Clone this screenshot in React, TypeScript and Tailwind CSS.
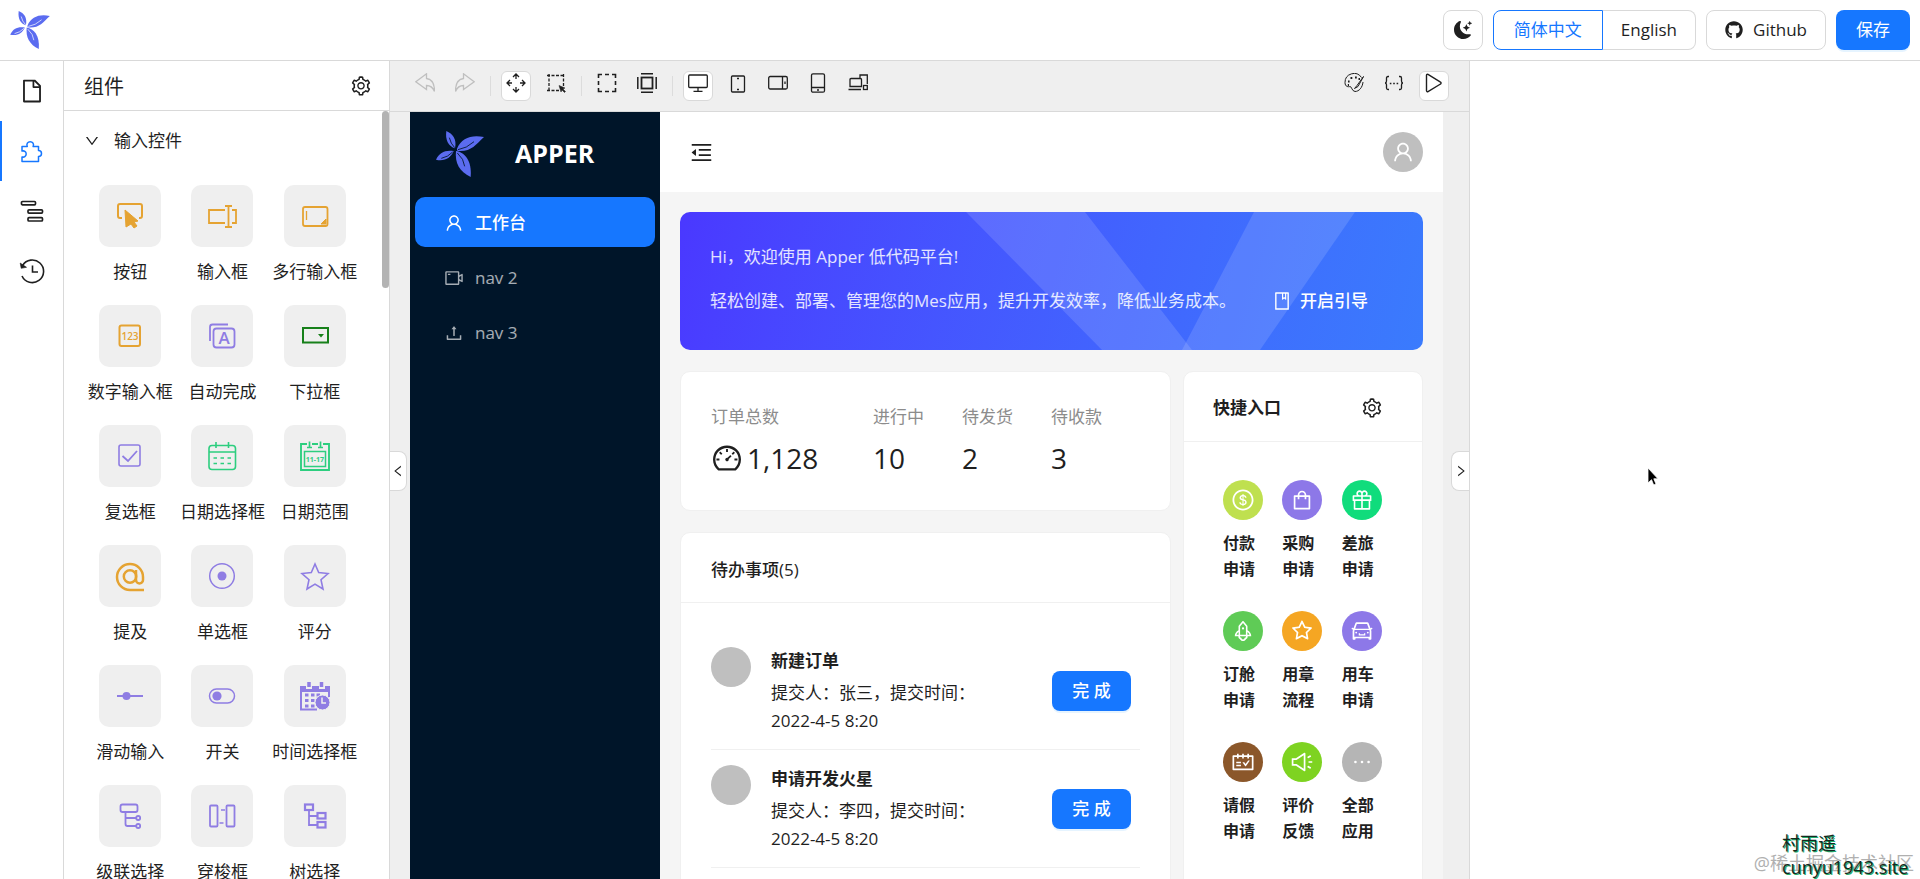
import React, { ReactNode } from 'react';
import {
  AiOutlineBook,
  AiOutlineCar,
  AiOutlineDashboard,
  AiOutlineDollarCircle,
  AiOutlineDown,
  AiOutlineEllipsis,
  AiOutlineFile,
  AiOutlineGift,
  AiOutlineLeft,
  AiOutlineMenuFold,
  AiOutlineRight,
  AiOutlineRocket,
  AiOutlineSchedule,
  AiOutlineSetting,
  AiOutlineShopping,
  AiOutlineSound,
  AiOutlineStar,
  AiOutlineUpload,
  AiOutlineUser,
  AiOutlineVideoCamera,
} from 'react-icons/ai';
import { BsMoonStarsFill } from 'react-icons/bs';
import { FaGithub } from 'react-icons/fa';

const Logo = ({ className }: { className: string }) => (
  <svg viewBox="0 0 144 138" className={className} fill="#5b6cf0" aria-hidden="true">
    <path d="M31 0C50 8 63 24 57 52 38 46 27 28 31 0Z" />
    <path d="M144 18C108 10 76 20 63 53c-1 4 1 7 5 7 38 2 50-18 76-42Z" />
    <path d="M0 86C10 64 28 56 53 60 45 80 26 92 0 86Z" />
    <path d="M60 60c26 4 48 28 44 78-34-16-48-42-44-78Z" />
    <path
      d="M40 20Q44 38 56 50M66 56Q92 52 114 32M16 82Q36 78 50 63M64 66Q84 84 86 106"
      fill="none"
      stroke="currentColor"
      strokeWidth="2.5"
    />
  </svg>
);

const Line = ({ children, size = 'size-5' }: { children: ReactNode; size?: string }) => (
  <svg viewBox="0 0 20 20" className={size} fill="none" stroke="currentColor" strokeWidth="1.3" aria-hidden="true">
    {children}
  </svg>
);

const railItems = [
  { label: '页面', icon: <AiOutlineFile className="size-[26px]" />, active: false },
  {
    label: '组件',
    icon: (
      <svg viewBox="0 0 24 24" className="size-6" fill="none" stroke="currentColor" strokeWidth="1.5" aria-hidden="true">
        <path d="M2 7.500h5.300a3.300 3.300 0 1 1 5.800 0H18.500v4a3 3 0 1 1 0 6V22.500H2v-4.600a3.100 3.100 0 1 0 0-5.800Z" strokeLinejoin="round" />
      </svg>
    ),
    active: true,
  },
  {
    label: '大纲',
    icon: (
      <svg viewBox="0 0 24 24" className="size-6" fill="none" stroke="currentColor" strokeWidth="1.7" aria-hidden="true">
        <rect x="1.500" y="2.500" width="14" height="3.300" rx="1" />
        <rect x="8" y="10.800" width="14.500" height="3.300" rx="1" />
        <rect x="8" y="18.700" width="14.500" height="3.300" rx="1" />
      </svg>
    ),
    active: false,
  },
  {
    label: '历史',
    icon: (
      <svg viewBox="0 0 26 26" className="size-[26px]" fill="none" stroke="currentColor" strokeWidth="1.6" aria-hidden="true">
        <path d="M3.600 7.500A11.300 11.300 0 1 1 3 18M13.500 7.500V14H19" />
        <path d="M1.200 5l1 5.300 5.300-1z" fill="currentColor" strokeWidth=".6" />
      </svg>
    ),
    active: false,
  },
];

const ORANGE = 'text-[#e5a332]';
const PURPLE = 'text-[#8f7de3]';
const GREEN = 'text-[#2dce7f]';

const widgets = [
  {
    name: '按钮',
    color: ORANGE,
    art: (
      <>
        <path d="M23 33h-2a2 2 0 0 1-2-2V21a2 2 0 0 1 2-2h20a2 2 0 0 1 2 2v10a2 2 0 0 1-2 2h-1" />
        <path d="M26 25l13 11-4 1 3 4-3 2-3-4-5 3z" fill="currentColor" strokeWidth="1" />
      </>
    ),
  },
  {
    name: '输入框',
    color: ORANGE,
    art: <path d="M34 25H18v13h16M41 25h4v13h-4M34 21h7M34 42h7M37.500 21v21" strokeWidth="1.800" />,
  },
  {
    name: '多行输入框',
    color: ORANGE,
    art: (
      <>
        <rect x="19" y="22" width="24.500" height="19" rx="2" strokeWidth="1.800" />
        <path d="M22.500 26v9" strokeWidth="1.300" />
        <path d="M37 39l5-5v5z" fill="currentColor" strokeWidth="1" />
      </>
    ),
  },
  {
    name: '数字输入框',
    color: ORANGE,
    art: (
      <>
        <rect x="20.500" y="20.500" width="20.500" height="20.500" rx="2" />
        <text x="31" y="35" textAnchor="middle" fontSize="10" fontWeight="600" fill="currentColor" stroke="none">
          123
        </text>
      </>
    ),
  },
  {
    name: '自动完成',
    color: PURPLE,
    art: (
      <>
        <rect x="22.500" y="23.500" width="21" height="19" rx="3" strokeWidth="1.800" />
        <path d="M37 19.500H21.500a2.500 2.500 0 0 0-2.500 2.500v14" strokeWidth="1.800" />
        <text x="33" y="39" textAnchor="middle" fontSize="17" fontWeight="600" fill="currentColor" stroke="none">
          A
        </text>
      </>
    ),
  },
  {
    name: '下拉框',
    color: 'text-[#17801a]',
    art: (
      <>
        <rect x="19" y="23" width="25" height="14.500" />
        <path d="M34 29h6l-3 3.500z" fill="currentColor" stroke="none" />
      </>
    ),
  },
  {
    name: '复选框',
    color: PURPLE,
    art: (
      <>
        <rect x="20" y="20" width="21" height="21" rx="2" strokeWidth="1.600" />
        <path d="M23.500 31l5.500 5 9-10" strokeWidth="1.800" />
      </>
    ),
  },
  {
    name: '日期选择框',
    color: GREEN,
    art: (
      <>
        <rect x="18" y="20.500" width="26.500" height="24" rx="3" strokeWidth="1.600" />
        <path d="M18 27h26M25 17v6M37.500 17v6" strokeWidth="1.600" />
        <path d="M22.500 33h3.500M29.500 33h3.500M36.500 33h3.500M22.500 38.500h3.500M29.500 38.500h3.500M36.500 38.500h3.500" strokeWidth="1.600" />
      </>
    ),
  },
  {
    name: '日期范围',
    color: GREEN,
    art: (
      <>
        <path d="M23 19h-6v26h28V19h-6M28 19h6" strokeWidth="1.900" />
        <path d="M25.500 16.500v6M36.500 16.500v6M23 22.500h5M34 22.500h5" strokeWidth="1.700" />
        <rect x="20.500" y="26.500" width="21" height="15" strokeWidth="1.500" />
        <text x="31" y="37" textAnchor="middle" fontSize="7" fontWeight="700" fill="currentColor" stroke="none">
          11-17
        </text>
      </>
    ),
  },
  {
    name: '提及',
    color: ORANGE,
    art: (
      <>
        <path d="M45 45H31a13 13 0 1 1 13-13v3a3.500 3.500 0 0 1-7 0V25" strokeWidth="2.500" />
        <circle cx="31" cy="31.500" r="6.200" strokeWidth="2.500" />
      </>
    ),
  },
  {
    name: '单选框',
    color: PURPLE,
    art: (
      <>
        <circle cx="31" cy="31" r="12.300" strokeWidth="1.500" />
        <circle cx="31" cy="31" r="4.500" fill="currentColor" stroke="none" />
      </>
    ),
  },
  {
    name: '评分',
    color: PURPLE,
    art: <path d="M31 19l3.700 8.600 9.300.9-7 6.200 2 9.300-8-4.900-8 4.900 2-9.300-7-6.200 9.300-.9z" strokeWidth="1.600" />,
  },
  {
    name: '滑动输入',
    color: PURPLE,
    art: (
      <>
        <path d="M18 31h26" strokeWidth="1.800" />
        <circle cx="27.500" cy="31" r="4" fill="currentColor" stroke="none" />
      </>
    ),
  },
  {
    name: '开关',
    color: PURPLE,
    art: (
      <>
        <rect x="18.500" y="24" width="25" height="14" rx="7" strokeWidth="1.500" />
        <circle cx="26" cy="31" r="4.600" fill="currentColor" stroke="none" />
      </>
    ),
  },
  {
    name: '时间选择框',
    color: PURPLE,
    art: (
      <>
        <path d="M17 26v18.500h16M45 26v6" />
        <path d="M16 21h6v3h6v-3h7v3h6v-3h5v6H16z" fill="currentColor" stroke="none" />
        <path d="M25 17v5M37.500 17v5" strokeWidth="3.500" />
        <path d="M21 30h3.500M27 30h3.500M32.500 30h3.500M21 35.500h3.500M27 35.500h3.500M21 41h3.500M27 41h3.500" strokeWidth="3.200" />
        <circle cx="38.500" cy="37.500" r="7.500" fill="currentColor" stroke="#efefef" strokeWidth="1" />
        <path d="M38 32.500v5.500h4" stroke="#efefef" strokeWidth="1.500" />
      </>
    ),
  },
  {
    name: '级联选择',
    color: PURPLE,
    art: (
      <g strokeWidth="1.800">
        <rect x="21.500" y="19.500" width="17" height="7.500" rx="2" />
        <path d="M26.500 27v12a2 2 0 0 0 2 2H37M26.500 33H37" />
        <circle cx="39.200" cy="33" r="2" />
        <circle cx="39.200" cy="41" r="2" />
      </g>
    ),
  },
  {
    name: '穿梭框',
    color: PURPLE,
    art: (
      <g strokeWidth="1.800">
        <rect x="19" y="20.500" width="7.500" height="21" rx="1" />
        <rect x="35.500" y="20.500" width="8" height="21" rx="1" />
        <path d="M30 25h4M28.500 38h4" strokeWidth="1.400" />
      </g>
    ),
  },
  {
    name: '树选择',
    color: PURPLE,
    art: (
      <g strokeWidth="2.200">
        <rect x="21" y="19.500" width="8" height="5.500" />
        <rect x="33.500" y="28" width="8" height="5.500" />
        <rect x="33.500" y="37" width="8" height="5.500" />
        <path d="M25 25v15h8M25 31h8" strokeWidth="1.800" />
      </g>
    ),
  },
];

const undoArrow = 'M.8 8.800L11.500.8v4.700c4.500.5 8 4.500 8 13-1.500-4-4-6-8-6V16.500z';

const tools: { label: string; icon: ReactNode; active?: boolean; muted?: boolean; split?: boolean }[] = [
  { label: '撤销', muted: true, icon: <Line><path d={undoArrow} /></Line> },
  { label: '重做', muted: true, icon: <Line><g transform="matrix(-1 0 0 1 20 0)"><path d={undoArrow} /></g></Line> },
  {
    label: '移动',
    active: true,
    split: true,
    icon: (
      <Line>
        <path d="M10 1v5M7 4l3-3 3 3M10 19v-5M7 16l3 3 3-3M1 10h5M4 7l-3 3 3 3M19 10h-5M16 7l3 3-3 3" />
      </Line>
    ),
  },
  {
    label: '框选',
    icon: (
      <Line>
        <path d="M1 2.500h18M3 1v18M17.500 1v12M1 17.500h12" strokeDasharray="3 1.500" />
        <path d="M13 12.500l6 2.500-2 1 2.500 2.500-1 1-2.500-2.500-1 2z" fill="currentColor" strokeWidth=".5" />
      </Line>
    ),
  },
  {
    label: '选区',
    split: true,
    icon: (
      <Line>
        <path d="M1.500 5V1.500H5M8 1.500h4M15 1.500h3.500V5M18.500 8v4M18.500 15v3.500H15M12 18.500H8M5 18.500H1.500V15M1.500 12V8" strokeWidth="1.600" />
      </Line>
    ),
  },
  {
    label: '容器',
    icon: (
      <Line>
        <rect x="4.500" y="4.500" width="11" height="11" strokeWidth="1.800" />
        <path d="M4 .8h12M4 19.200h12M.8 4v12M19.200 4v12" strokeWidth="1.500" />
      </Line>
    ),
  },
  {
    label: '桌面',
    active: true,
    split: true,
    icon: (
      <Line>
        <rect x=".7" y="2" width="18.600" height="12.500" rx="1" />
        <path d="M10 14.500V18M5.500 18.300h9" />
      </Line>
    ),
  },
  {
    label: '平板竖屏',
    icon: (
      <Line>
        <rect x="3.500" y="3" width="13" height="16" rx="1" />
        <path d="M9 5.500h2M9 16.500h2" strokeWidth="1.600" />
      </Line>
    ),
  },
  {
    label: '平板横屏',
    icon: (
      <Line>
        <rect x=".7" y="3.500" width="18.600" height="12.500" rx="1.500" />
        <path d="M14.500 3.500V16M17 8.500v2.500" />
      </Line>
    ),
  },
  {
    label: '手机竖屏',
    icon: (
      <Line>
        <rect x="3.500" y=".8" width="13" height="18.400" rx="1.500" />
        <path d="M3.500 14.500h13M9 17h2" />
      </Line>
    ),
  },
  {
    label: '多设备',
    icon: (
      <Line>
        <path d="M12 5V2h7.300v9M2 13.500V6.500a1 1 0 0 1 1-1h9.500a1 1 0 0 1 1 1v7zM.5 16.500h12.500" />
        <rect x="15.500" y="12.500" width="3.800" height="4" />
      </Line>
    ),
  },
];

const menus = [
  { text: '工作台', icon: <AiOutlineUser className="size-5" />, active: true },
  { text: 'nav 2', icon: <AiOutlineVideoCamera className="size-5" />, active: false },
  { text: 'nav 3', icon: <AiOutlineUpload className="size-5" />, active: false },
];

const stats = [
  { label: '进行中', value: '10' },
  { label: '待发货', value: '2' },
  { label: '待收款', value: '3' },
];

const todos = [
  { title: '新建订单', person: '张三', time: '2022-4-5 8:20' },
  { title: '申请开发火星', person: '李四', time: '2022-4-5 8:20' },
];

const shortcuts = [
  { lines: ['付款', '申请'], bg: 'bg-[#bfe04f]', icon: AiOutlineDollarCircle },
  { lines: ['采购', '申请'], bg: 'bg-[#8d78e8]', icon: AiOutlineShopping },
  { lines: ['差旅', '申请'], bg: 'bg-[#10dc7c]', icon: AiOutlineGift },
  { lines: ['订舱', '申请'], bg: 'bg-[#5fcb56]', icon: AiOutlineRocket },
  { lines: ['用章', '流程'], bg: 'bg-[#f5a623]', icon: AiOutlineStar },
  { lines: ['用车', '申请'], bg: 'bg-[#8d78e8]', icon: AiOutlineCar },
  { lines: ['请假', '申请'], bg: 'bg-[#8b572a]', icon: AiOutlineSchedule },
  { lines: ['评价', '反馈'], bg: 'bg-[#7ed321]', icon: AiOutlineSound },
  { lines: ['全部', '应用'], bg: 'bg-[#b5b5b5]', icon: AiOutlineEllipsis },
];

const TopBar = () => (
  <header className="flex h-[61px] shrink-0 items-center justify-between border-b border-[#d9d9d9] bg-white px-[10px]">
    <Logo className="h-[38px] w-10 text-white" />
    <div className="flex items-center gap-[10px]">
      <button aria-label="深色模式" className="flex size-10 items-center justify-center rounded-lg border border-[#d9d9d9]">
        <BsMoonStarsFill className="size-[18px]" />
      </button>
      <div className="flex">
        <button className="h-10 rounded-l-lg border border-[#1677ff] px-5 text-[#1677ff]">简体中文</button>
        <button className="h-10 rounded-r-lg border border-l-0 border-[#d9d9d9] px-[18px]">English</button>
      </div>
      <button className="flex h-10 items-center gap-[10px] rounded-lg border border-[#d9d9d9] px-[18px]">
        <FaGithub className="size-[18px]" />
        Github
      </button>
      <button className="h-10 rounded-lg bg-[#1677ff] px-5 text-white shadow-[0_2px_0_#e6f4ff]">保存</button>
    </div>
  </header>
);

const Rail = () => (
  <nav className="w-16 shrink-0 border-r border-[#d9d9d9] bg-white">
    {railItems.map((item) => (
      <button
        key={item.label}
        aria-label={item.label}
        className={`flex h-[60px] w-full items-center justify-center border-l-2 pr-[2px] ${
          item.active ? 'border-[#1677ff] text-[#1677ff]' : 'border-transparent'
        }`}
      >
        {item.icon}
      </button>
    ))}
  </nav>
);

const ComponentPanel = () => (
  <aside className="flex w-[326px] shrink-0 flex-col border-r border-[#d9d9d9] bg-white">
    <div className="flex h-[50px] shrink-0 items-center justify-between border-b border-[#d9d9d9] pr-[17px] pl-5">
      <h2 className="pt-[2px] text-[20px]">组件</h2>
      <button aria-label="设置">
        <AiOutlineSetting className="size-[22px]" />
      </button>
    </div>
    <div className="relative min-h-0 flex-1 overflow-hidden pr-7 pl-5">
      <button className="flex h-[60px] items-center gap-[14px] text-[17px]">
        <AiOutlineDown className="size-4" />
        输入控件
      </button>
      <div className="grid grid-cols-3 gap-y-5 pt-[14px]">
        {widgets.map((w) => (
          <div key={w.name} className="flex flex-col items-center">
            <svg
              viewBox="0 0 62 62"
              className={`size-[62px] rounded-[10px] bg-[#efefef] ${w.color}`}
              fill="none"
              stroke="currentColor"
              strokeWidth="2"
              aria-hidden="true"
            >
              {w.art}
            </svg>
            <span className="mt-3 leading-[26px] whitespace-nowrap">{w.name}</span>
          </div>
        ))}
      </div>
      <div className="absolute top-0 right-0 h-[177px] w-[7px] rounded-full bg-[#b3b3b3]"></div>
    </div>
  </aside>
);

const Toolbar = () => (
  <div className="flex h-[51px] shrink-0 items-center justify-between border-b border-[#d9d9d9] px-5">
    <div className="flex items-center gap-[10px]">
      {tools.map((t) => (
        <React.Fragment key={t.label}>
          {t.split && <span className="h-5 w-px bg-[#dcdcdc]"></span>}
          <button
            aria-label={t.label}
            className={`flex size-[30px] items-center justify-center rounded-md border pb-[6px] ${
              t.active ? 'border-[#d9d9d9] bg-white' : 'border-transparent'
            } ${t.muted ? 'text-[#bfbfbf]' : ''}`}
          >
            {t.icon}
          </button>
        </React.Fragment>
      ))}
    </div>
    <div className="flex items-center gap-[10px]">
      <button aria-label="主题" className="flex size-[30px] items-center justify-center pb-[6px]">
        <Line>
          <path d="M17.500 4.500A9 9 0 0 0 1 9.500C1 14 4.500 14 6 13.500c2 0 1.500 4.500 5 5 4 0 7.500-4 8-9.500" strokeWidth="1" />
          <path d="M19.500 3.500L13 12.500l-2.500 3 3.500-2z" strokeWidth="1" />
          <path d="M4 8.500h1.600M6.500 5h1.800M11 4.500h1.800M3.800 12h1.200M14.500 6h1.500" strokeWidth="1.800" />
        </Line>
      </button>
      <button aria-label="源码" className="flex size-[30px] items-center justify-center pb-[6px]">
        <Line>
          <path d="M5 3.500H4c-1 0-1.500.5-1.500 1.500v3c0 1-.5 2-1.500 2 1 0 1.500 1 1.500 2v3c0 1 .5 1.500 1.500 1.500h1M15 3.500h1c1 0 1.500.5 1.500 1.500v3c0 1 .5 2 1.500 2-1 0-1.500 1-1.500 2v3c0 1-.5 1.500-1.500 1.500h-1" />
          <path d="M5.800 10.500h1.600M9.200 10.500h1.600M12.600 10.500h1.600" strokeWidth="1.700" />
        </Line>
      </button>
      <button aria-label="预览" className="flex size-[30px] items-center justify-center rounded-md border border-[#d9d9d9] bg-white pb-[6px]">
        <Line>
          <path d="M2.500 2.200v15.600a1 1 0 0 0 1.500.8L16.500 11a1 1 0 0 0 0-1.800L4 1.400A1 1 0 0 0 2.500 2.200z" strokeWidth="1.400" />
        </Line>
      </button>
    </div>
  </div>
);

const AppMenu = () => (
  <div className="w-[250px] shrink-0 bg-[#001529] px-[5px]">
    <div className="flex h-[85px] items-center pb-[2px] pl-[21px]">
      <Logo className="h-[46px] w-12 text-[#001529]" />
      <span className="ml-[31px] text-[25px] font-bold text-white">APPER</span>
    </div>
    <div className="flex flex-col gap-[5px]">
      {menus.map((m) => (
        <a
          key={m.text}
          href="#"
          className={`flex h-[50px] items-center gap-[11px] rounded-[10px] pt-[2px] pl-[29px] ${
            m.active ? 'bg-[#1677ff] font-medium text-white' : 'text-white/65'
          }`}
        >
          {m.icon}
          {m.text}
        </a>
      ))}
    </div>
  </div>
);

const Banner = () => (
  <section className="relative h-[138px] overflow-hidden rounded-[10px] bg-linear-105 from-[#4a38ff] to-[#3a7bfd] text-white/85">
    <svg viewBox="0 0 743 138" preserveAspectRatio="none" className="absolute inset-0 size-full" fill="#fff" fillOpacity=".13" aria-hidden="true">
      <path d="M286 0H405L512 138H422z" />
      <path d="M574 0H675L580 138H502z" />
    </svg>
    <div className="relative px-[30px] pt-[30px]">
      <p className="leading-[30px]">Hi，欢迎使用 Apper 低代码平台!</p>
      <div className="mt-[14px] flex items-center leading-[30px]">
        <p className="whitespace-nowrap">轻松创建、部署、管理您的Mes应用，提升开发效率，降低业务成本。</p>
        <a href="#" className="ml-9 flex items-center gap-2 font-medium whitespace-nowrap text-white">
          <AiOutlineBook className="size-5" />
          开启引导
        </a>
      </div>
    </div>
  </section>
);

const StatsCard = () => (
  <section className="flex h-[140px] gap-[38px] rounded-[10px] border border-[#f0f0f0] bg-white px-[30px] pt-[31px]">
    <div className="w-[124px]">
      <p className="leading-7 text-[#8c8c8c]">订单总数</p>
      <p className="mt-[7px] flex items-center gap-1 text-[28px] leading-10">
        <AiOutlineDashboard className="size-8" />
        1,128
      </p>
    </div>
    {stats.map((s) => (
      <div key={s.label}>
        <p className="leading-7 text-[#8c8c8c]">{s.label}</p>
        <p className="mt-[7px] text-[28px] leading-10">{s.value}</p>
      </div>
    ))}
  </section>
);

const TodoCard = () => (
  <section className="rounded-[10px] border border-[#f0f0f0] bg-white">
    <h3 className="flex h-[70px] items-center border-b border-[#f0f0f0] px-[30px] pt-1 font-medium">待办事项(5)</h3>
    <ul className="px-[30px] pt-[29px]">
      {todos.map((t) => (
        <li key={t.title} className="flex items-center border-b border-[#f0f0f0] pt-[15px] pb-[14px]">
          <span className="size-10 shrink-0 self-start rounded-full bg-[#bfbfbf]"></span>
          <div className="ml-5 flex-1">
            <h4 className="mb-1 leading-7 font-bold">{t.title}</h4>
            <p className="max-w-[230px] leading-7">
              提交人：{t.person}，提交时间： {t.time}
            </p>
          </div>
          <button className="mr-[9px] h-10 w-[79px] rounded-lg bg-[#1677ff] font-medium text-white shadow-[0_2px_0_#e6f4ff]">完 成</button>
        </li>
      ))}
    </ul>
    <div className="h-28"></div>
  </section>
);

const ShortcutCard = () => (
  <section className="w-60 shrink-0 rounded-[10px] border border-[#f0f0f0] bg-white">
    <div className="flex h-[70px] items-center justify-between border-b border-[#f0f0f0] pt-[2px] pr-[39px] pl-[29px]">
      <h3 className="font-bold">快捷入口</h3>
      <button aria-label="快捷入口设置">
        <AiOutlineSetting className="size-[22px]" />
      </button>
    </div>
    <div className="grid grid-cols-3 gap-y-[29px] pt-[38px] pr-[31px] pl-[29px]">
      {shortcuts.map((s) => (
        <a key={s.lines.join('')} href="#" className="pl-[10px]">
          <span className={`flex size-10 items-center justify-center rounded-full text-white ${s.bg}`}>
            <s.icon className="size-6" />
          </span>
          <span className="mt-[10px] block text-[16px] leading-[26px] font-bold">
            {s.lines[0]}
            <br />
            {s.lines[1]}
          </span>
        </a>
      ))}
    </div>
  </section>
);

const Canvas = () => (
  <div className="flex min-h-0 flex-1 overflow-hidden pr-[26px] pl-5">
    <AppMenu />
    <div className="min-w-0 flex-1 bg-[#f5f5f5]">
      <div className="flex h-20 items-center justify-between bg-white pr-5 pl-[29px]">
        <button aria-label="收起菜单">
          <AiOutlineMenuFold className="size-[25px]" />
        </button>
        <span className="flex size-10 items-center justify-center rounded-full bg-[#bfbfbf] text-white">
          <AiOutlineUser className="size-6" />
        </span>
      </div>
      <div className="p-5">
        <Banner />
        <div className="mt-[21px] flex gap-3">
          <div className="flex min-w-0 flex-1 flex-col gap-[21px]">
            <StatsCard />
            <TodoCard />
          </div>
          <ShortcutCard />
        </div>
      </div>
    </div>
  </div>
);

const Workspace = () => (
  <main className="relative flex min-w-0 flex-1 flex-col bg-[#efefef]">
    <Toolbar />
    <Canvas />
    <button
      aria-label="收起左侧"
      className="absolute top-[390px] left-0 flex h-10 w-[17px] items-center justify-center rounded-r-lg border border-l-0 border-[#d9d9d9] bg-white"
    >
      <AiOutlineLeft className="size-[14px]" />
    </button>
    <button
      aria-label="收起右侧"
      className="absolute top-[390px] right-0 flex h-10 w-[18px] items-center justify-center rounded-l-lg border border-r-0 border-[#d9d9d9] bg-white"
    >
      <AiOutlineRight className="size-[14px]" />
    </button>
  </main>
);

export default function App() {
  return (
    <div className="relative flex h-screen flex-col overflow-hidden bg-white font-['Open_Sans','Noto_Sans_CJK_SC',sans-serif] text-[17px] text-[#1f1f1f]">
      <TopBar />
      <div className="flex min-h-0 flex-1">
        <Rail />
        <ComponentPanel />
        <Workspace />
        <aside className="w-[451px] shrink-0 border-l border-[#d9d9d9] bg-white"></aside>
      </div>

      {/* mouse pointer */}
      <svg viewBox="0 0 12 19" className="absolute top-[467px] left-[1647px] h-[19px] w-3" aria-hidden="true">
        <path d="M1 1v15l3.500-3.300 2.200 5.300 2.300-1-2.200-5.200H11z" fill="#000" stroke="#fff" strokeWidth=".8" />
      </svg>

      {/* watermark */}
      <p className="absolute right-[6px] bottom-[4px] text-[18px] leading-6 text-[#b0b0b0]">@稀土掘金技术社区</p>
      <div className="absolute right-[5px] bottom-0 w-[133px] text-[18px] leading-6 text-[#14281f] [text-shadow:1px_1px_0_#1fae6b]">
        <p>村雨遥</p>
        <p>cunyu1943.site</p>
      </div>
    </div>
  );
}
